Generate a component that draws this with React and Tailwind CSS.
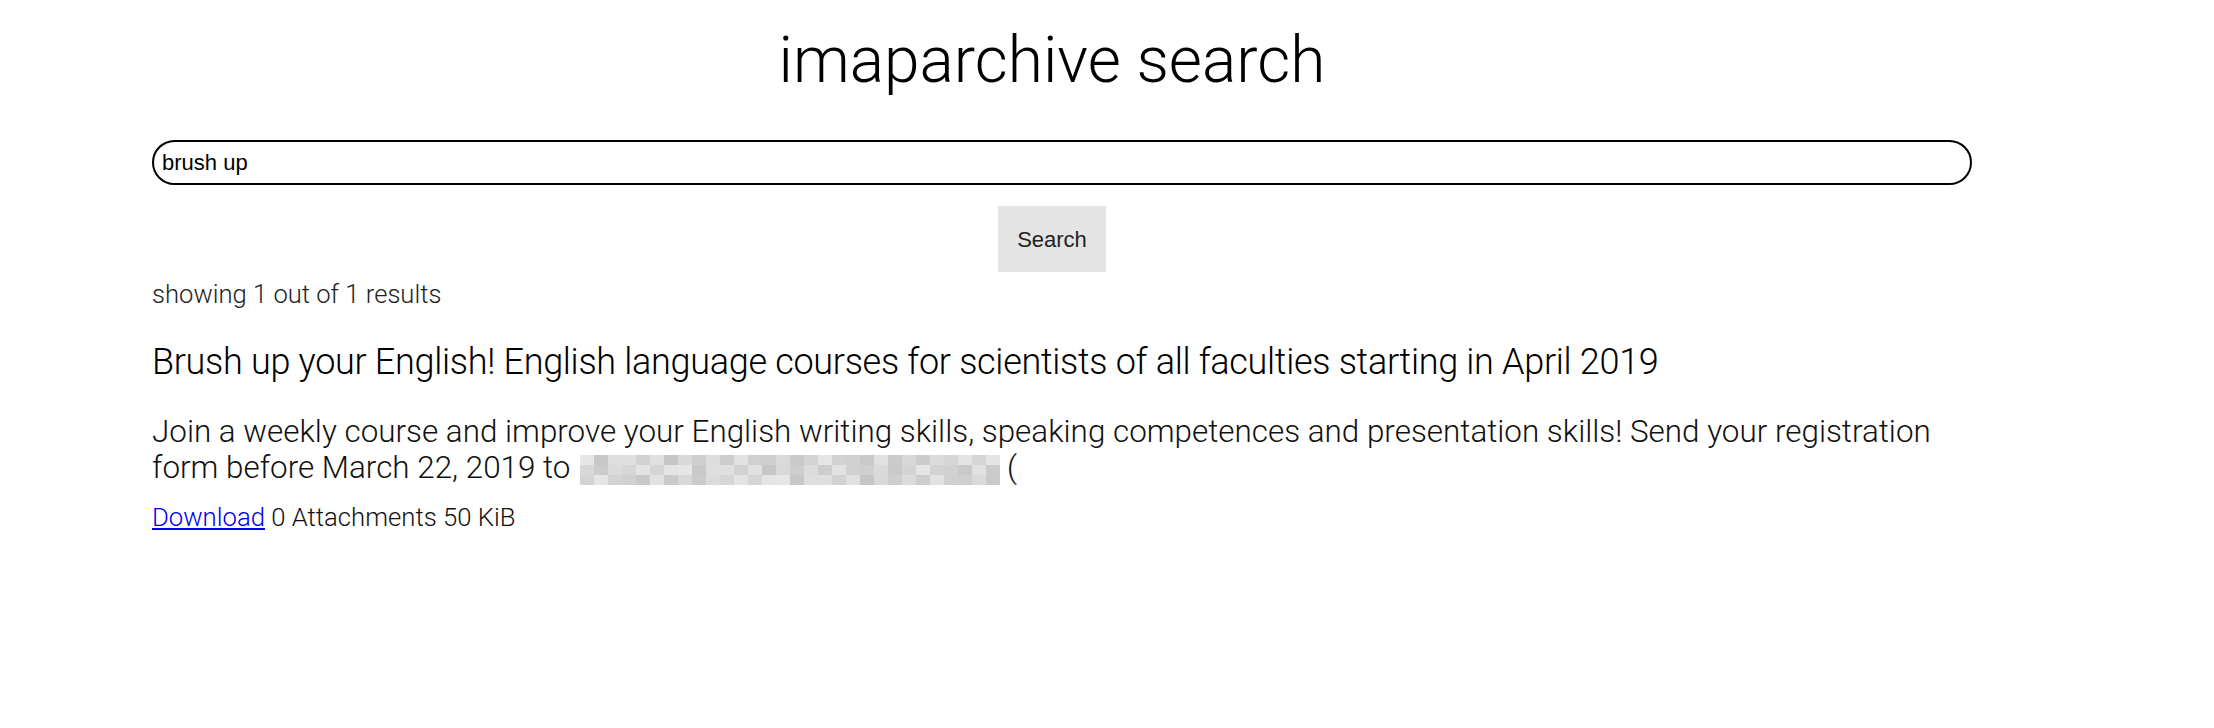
import React from "react";

const roboto = "font-['Roboto',sans-serif] font-light";

// pixelated (redacted) e-mail address
const shades = [
  "#e6e6e6", "#cfcfcf", "#d6d6d6", "#dcdcdc", "#cbcbcb", "#e0e0e0", "#d3d3d3", "#c8c8c8",
  "#dadada", "#e3e3e3", "#cdcdcd", "#d8d8d8", "#c6c6c6", "#d1d1d1", "#dedede", "#cacaca",
  "#d5d5d5", "#e2e2e2", "#cccccc", "#d9d9d9", "#c9c9c9", "#dfdfdf", "#d4d4d4", "#e4e4e4",
  "#d0d0d0", "#dbdbdb", "#cecece", "#e1e1e1", "#d2d2d2", "#e5e5e5",
];

const Redacted = () => (
  <span className="inline-block align-[-7px] w-[421px] h-[30px] ml-[2px] mr-[6px] overflow-hidden">
    {[0, 1, 2].map((row) => (
      <span key={row} className="flex h-[10px]">
        {shades.map((c, i) => (
          <span
            key={i}
            className="block h-full w-[14px] shrink-0"
            style={{ backgroundColor: shades[(i * 7 + row * 11) % shades.length] }}
          />
        ))}
      </span>
    ))}
  </span>
);

const Result = () => (
  <div>
    <h2 className={`${roboto} text-[36px] leading-[44px] tracking-[-0.3px] text-black mt-[32px]`}>
      Brush up your English! English language courses for scientists of all faculties starting in April 2019
    </h2>
    <p className={`${roboto} text-[31.4px] leading-[36px] text-[#111] mt-[30px]`}>
      Join a weekly course and improve your English writing skills, speaking competences and presentation skills! Send your registration form before March 22, 2019 to{" "}
      <Redacted />(
    </p>
    <div className={`${roboto} text-[25.7px] leading-[28px] text-[#111] mt-[17px]`}>
      <a href="#" className="text-[#0000ee] underline">Download</a> 0 Attachments 50 KiB
    </div>
  </div>
);

export default function App() {
  return (
    <div className="min-h-screen bg-white">
      <div className="ml-[152px] w-[1800px] pb-10">
        <h1 className={`${roboto} text-[64px] leading-[75px] text-black text-center pt-[23px]`}>
          imaparchive search
        </h1>

        <input
          type="text"
          defaultValue="brush up"
          className="mt-[42px] box-content block w-full h-[41px] px-[8px] border-2 border-black rounded-full font-['Liberation_Sans',Arial,sans-serif] text-[22px] text-black outline-none"
        />

        <div className="flex justify-center mt-[21px]">
          <button className="w-[108px] h-[66px] bg-[#e4e4e4] font-['Liberation_Sans',Arial,sans-serif] text-[22px] text-[#222]">
            Search
          </button>
        </div>

        <div className={`${roboto} text-[25.6px] leading-[28px] text-[#222] mt-[8px]`}>
          showing 1 out of 1 results
        </div>

        <Result />
      </div>
    </div>
  );
}
